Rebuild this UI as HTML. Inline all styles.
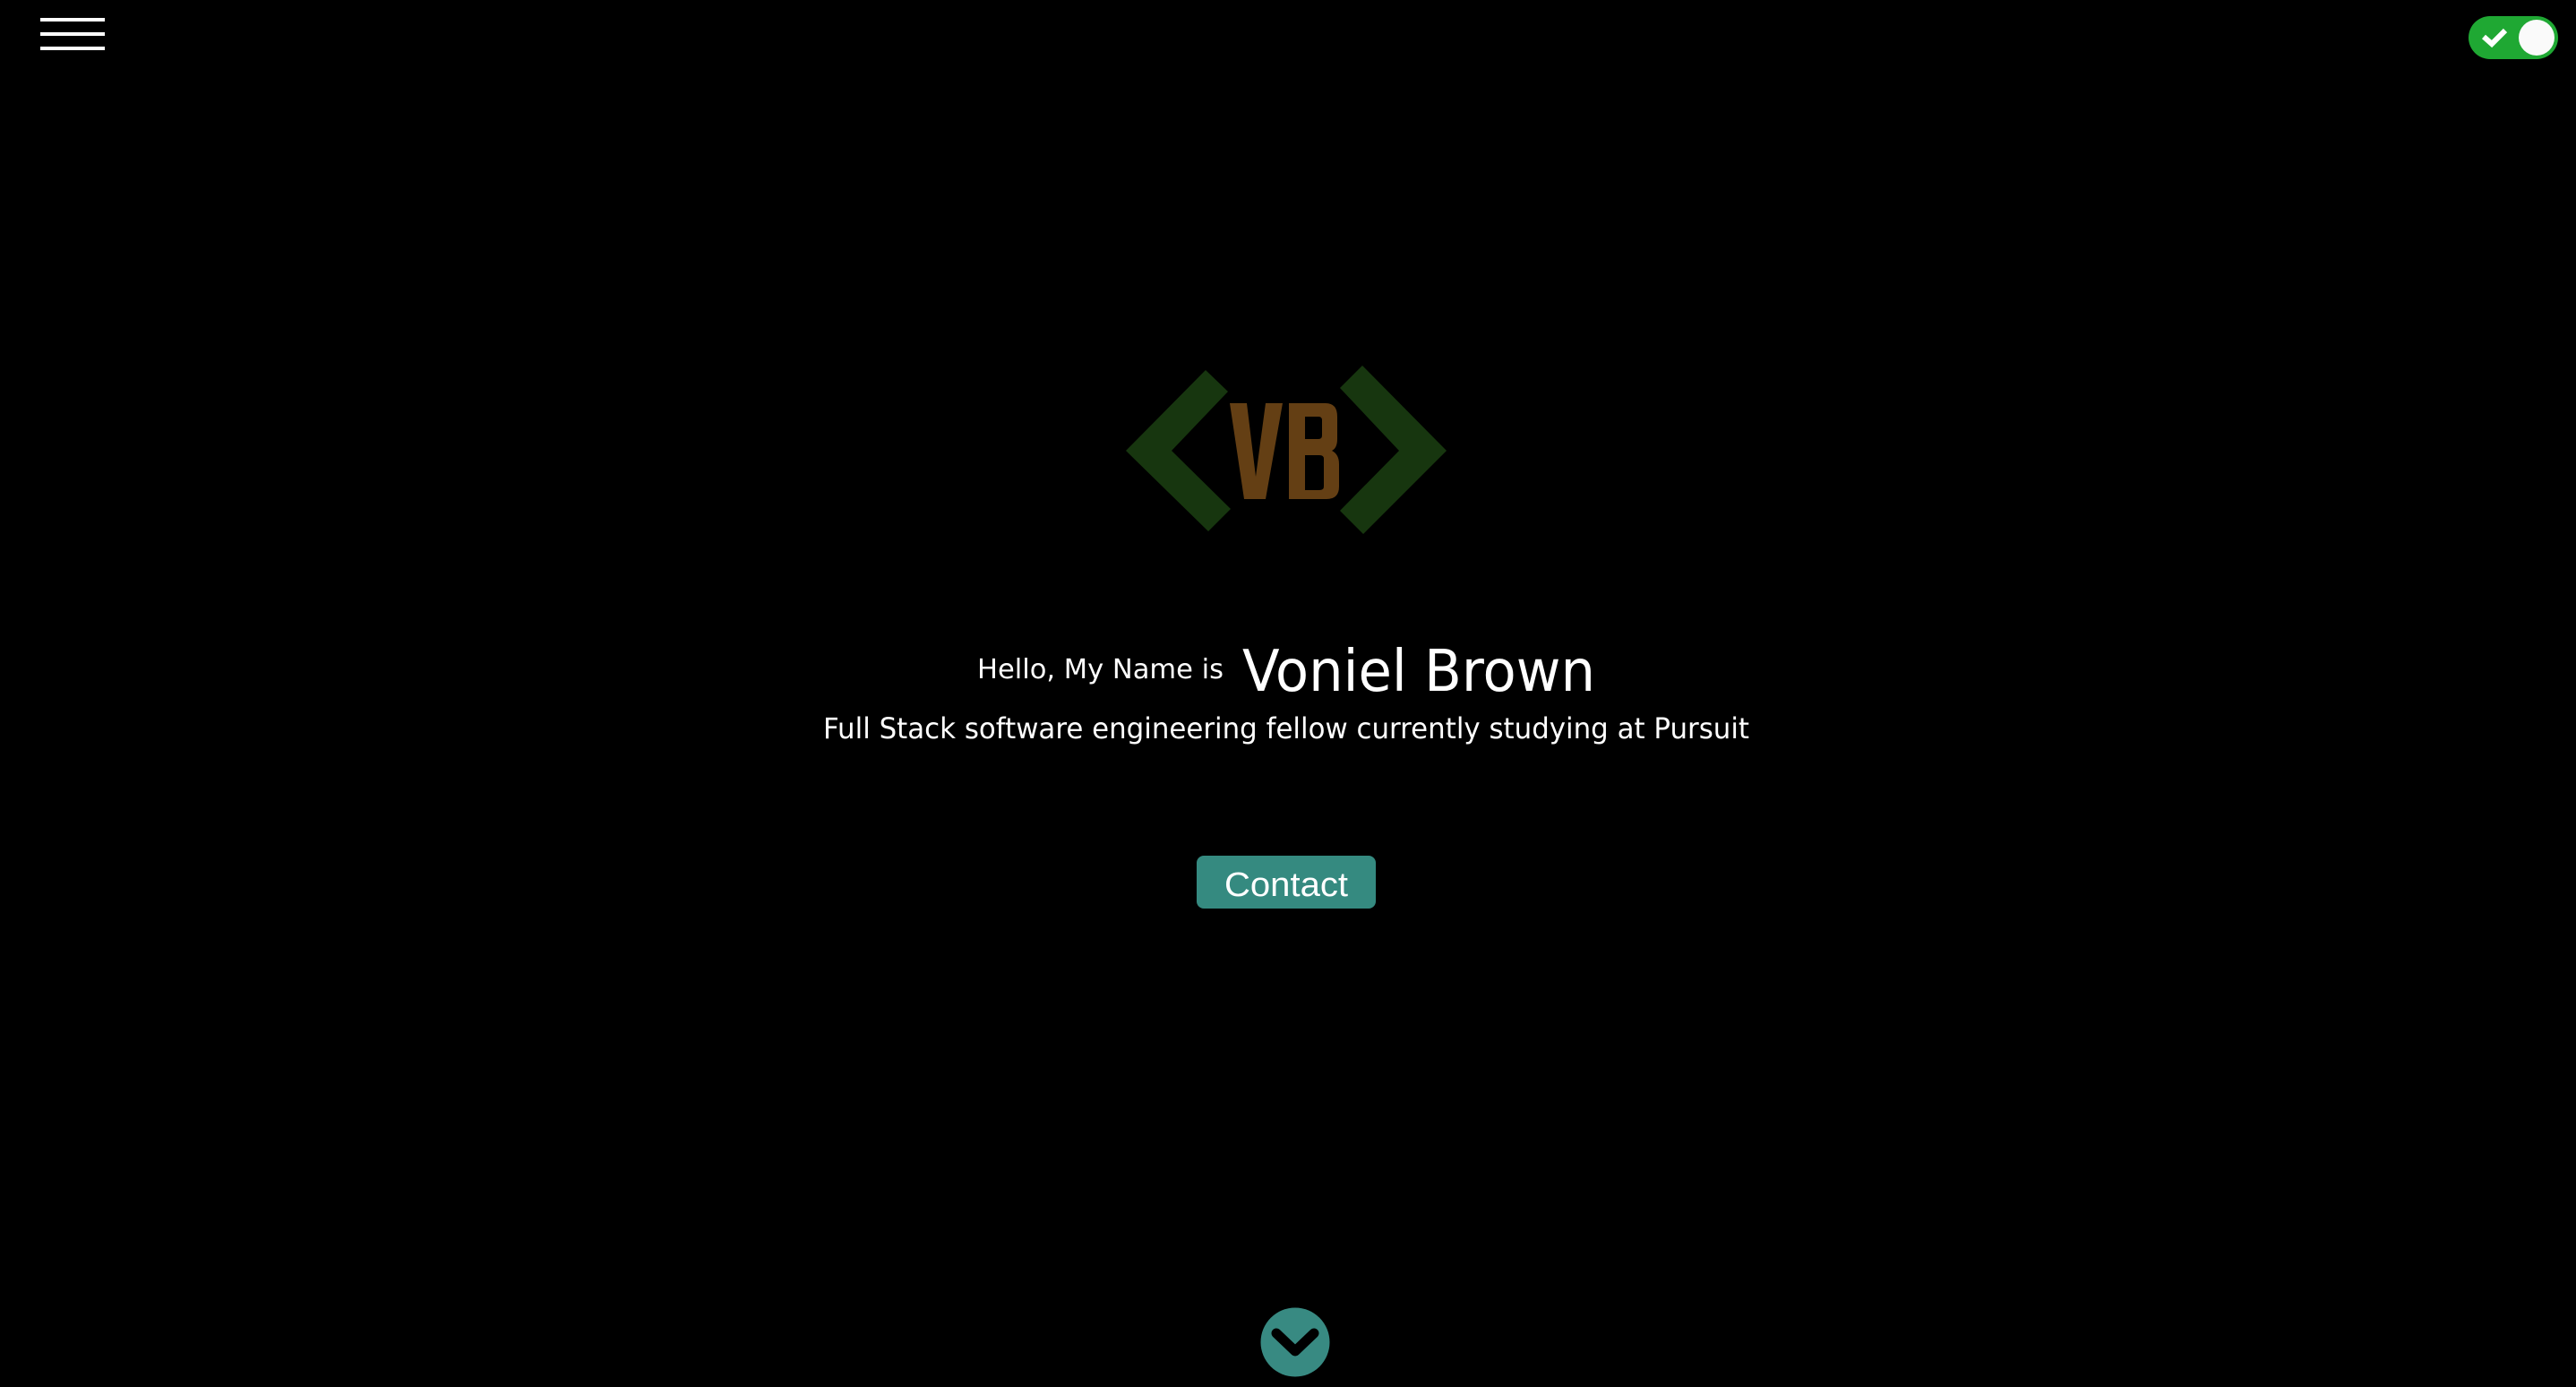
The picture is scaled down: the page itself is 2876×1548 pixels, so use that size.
<!DOCTYPE html>
<html><head><meta charset="utf-8"><style>
html,body{margin:0;padding:0;background:#000;width:2876px;height:1548px;overflow:hidden}
svg{display:block}
</style></head><body>
<svg width="2876" height="1548" viewBox="0 0 2876 1548" xmlns="http://www.w3.org/2000/svg">
<rect width="2876" height="1548" fill="#000"/>
<rect x="45" y="20" width="72" height="4" fill="#fff"/>
<rect x="45" y="36" width="72" height="4" fill="#fff"/>
<rect x="45" y="52" width="72" height="4" fill="#fff"/>
<rect x="2756" y="18" width="100" height="48" rx="24" fill="#1fa833"/>
<circle cx="2832" cy="42" r="20" fill="#fafafa"/>
<polyline points="2773,41 2782,49 2797,34" fill="none" stroke="#fff" stroke-width="6"/>
<polygon points="1257,503 1346,413 1371,437 1308,503 1374,568 1349,593" fill="#17360f"/>
<polygon points="1615,503 1521,408 1496,433 1562,503 1496,570 1522,596" fill="#17360f"/>
<polygon points="1373,450 1392,450 1402,532 1413,450 1432,450 1413,557 1389,557" fill="#643f14"/>
<path fill-rule="evenodd" fill="#643f14" d="M1439 450 H1480 Q1493 450 1493 465 V490 Q1493 500 1487 503 Q1495 507 1495 518 V543 Q1495 557 1481 557 H1439 Z M1457 465 H1472 Q1476 465 1476 469 V486 Q1476 490 1472 490 H1457 Z M1457 508 H1473 Q1478 508 1478 512 V543 Q1478 547 1473 547 H1457 Z"/>
<g font-family="'DejaVu Sans','Liberation Sans',sans-serif" fill="#fff">
<text x="1091" y="757" font-size="30" textLength="275" lengthAdjust="spacingAndGlyphs">Hello, My Name is</text>
<text x="1387" y="771" font-size="64" textLength="394" lengthAdjust="spacingAndGlyphs">Voniel Brown</text>
<text x="919" y="824" font-size="32" textLength="1034" lengthAdjust="spacingAndGlyphs">Full Stack software engineering fellow currently studying at Pursuit</text>
</g>
<rect x="1336" y="955" width="200" height="59" rx="8" fill="#358a80"/>
<text x="1367" y="1000" font-family="'Liberation Sans',sans-serif" font-size="38" fill="#fff" textLength="138" lengthAdjust="spacingAndGlyphs">Contact</text>
<circle cx="1446" cy="1498" r="38.5" fill="#388a82"/>
<polyline points="1425,1488 1446,1508 1467,1488" fill="none" stroke="#000" stroke-width="11" stroke-linecap="round" stroke-linejoin="round"/>
</svg>
</body></html>
